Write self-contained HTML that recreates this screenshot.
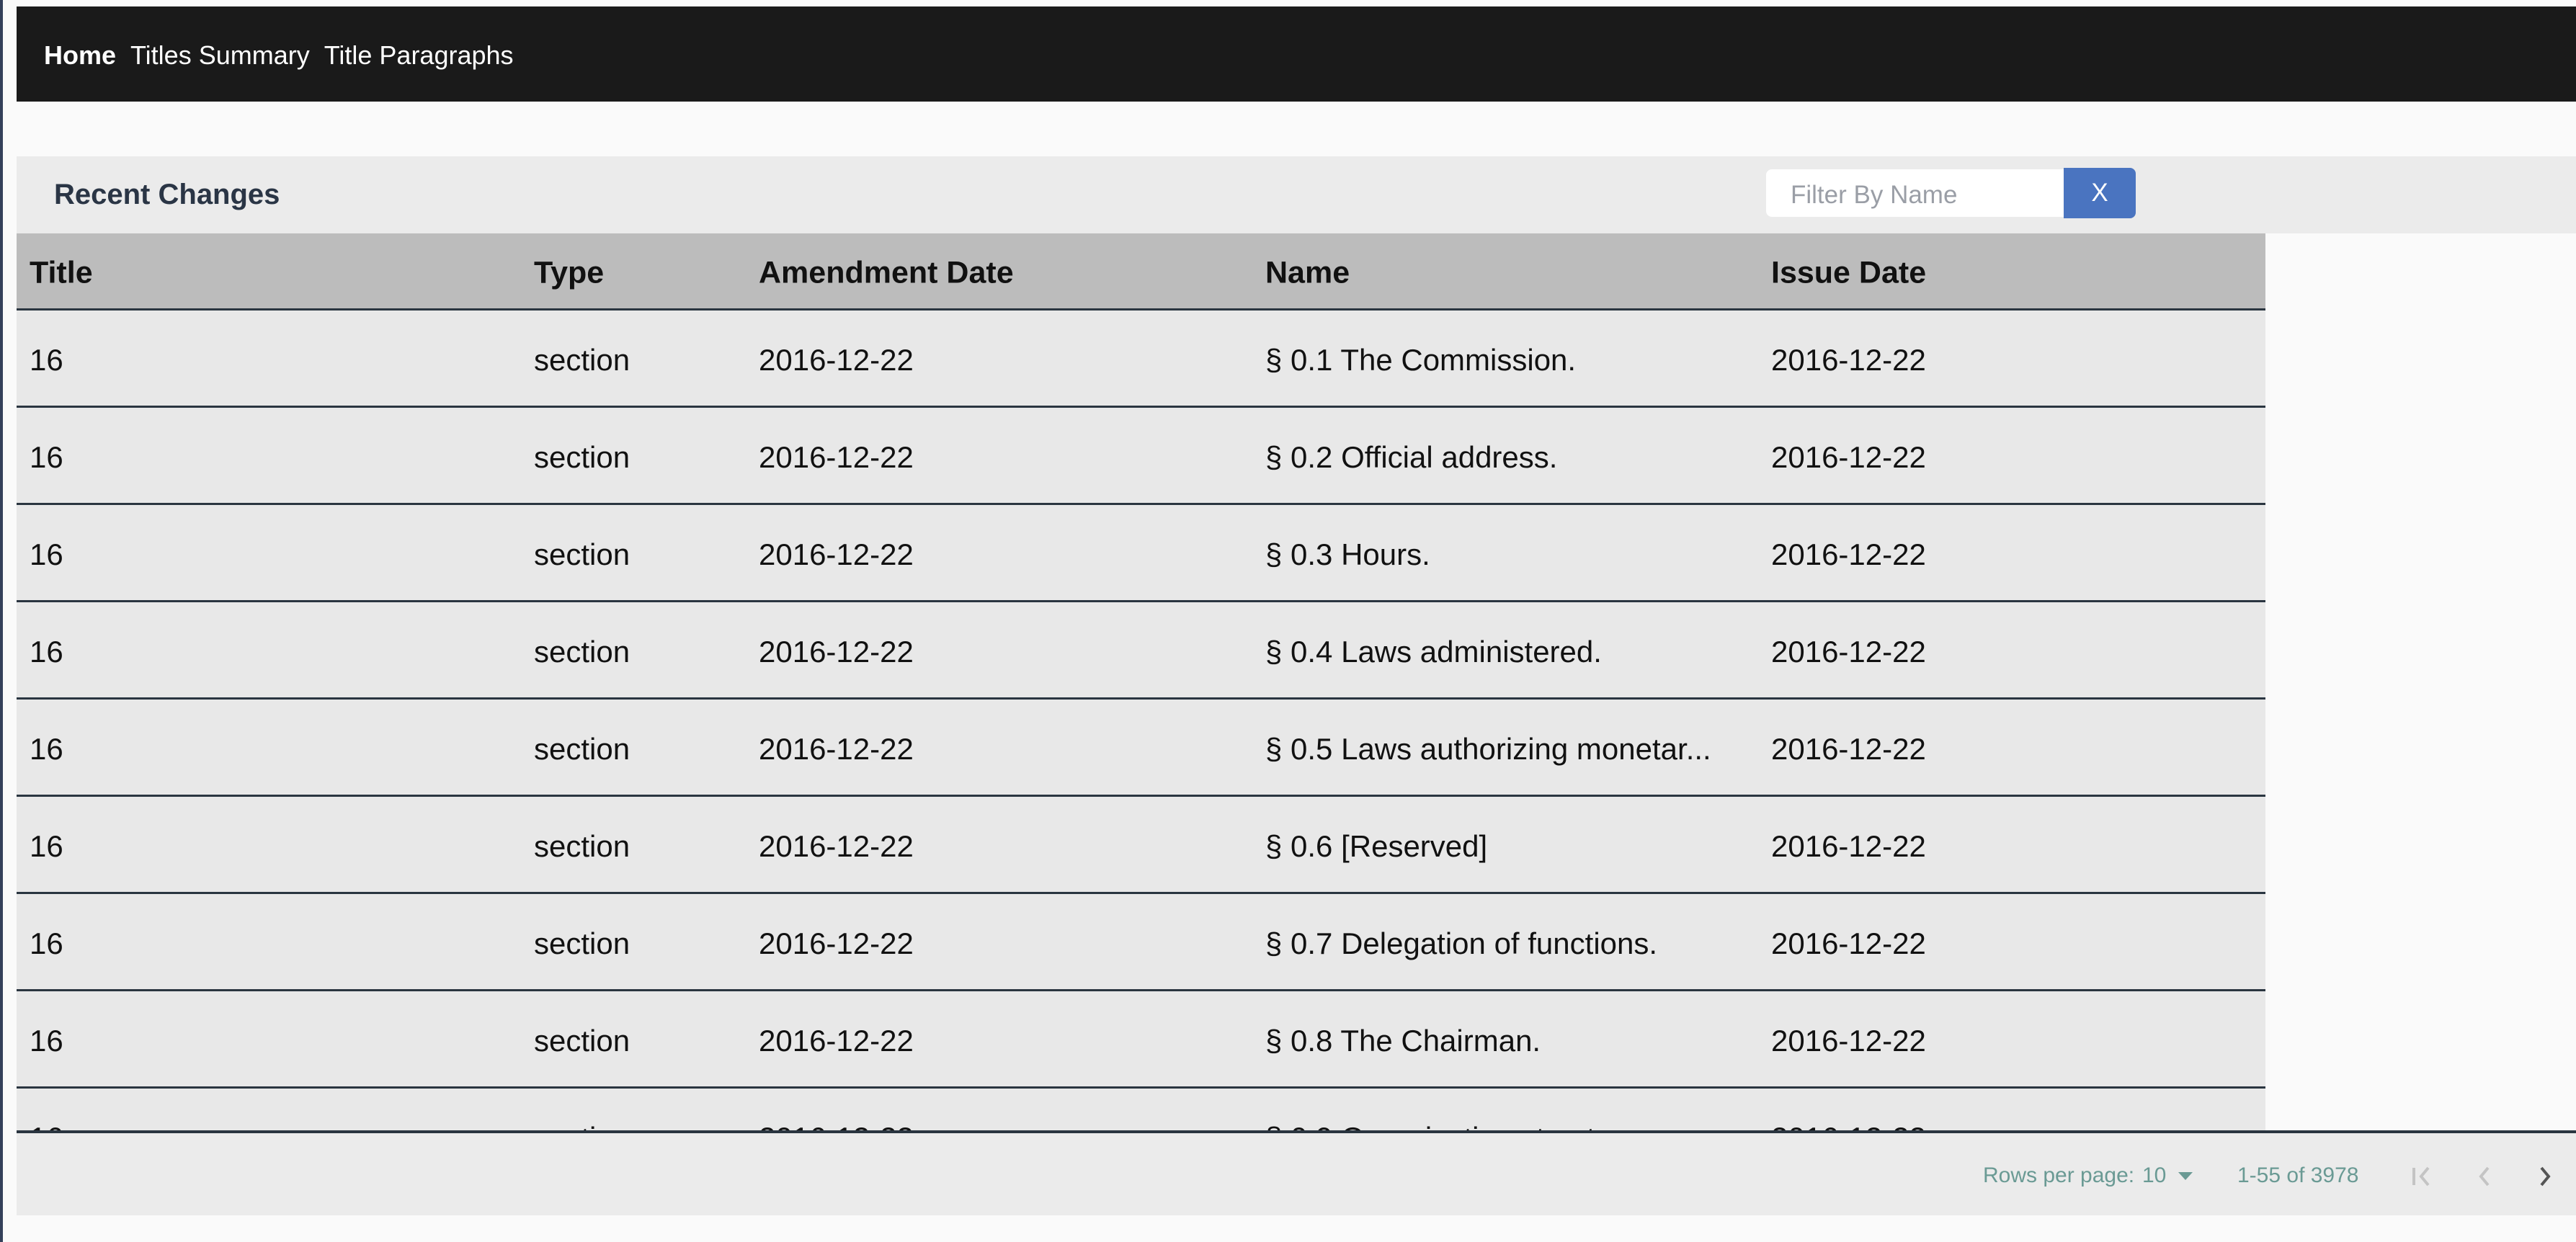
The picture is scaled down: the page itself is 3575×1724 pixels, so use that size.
<!DOCTYPE html>
<html><head><meta charset="utf-8"><style>
*{margin:0;padding:0;box-sizing:border-box}
html,body{width:3575px;height:1724px;overflow:hidden;background:#fafafa;font-family:"Liberation Sans",sans-serif}
.lb{position:absolute;left:0;top:0;width:4px;height:1724px;background:#34405a}
.nav{position:absolute;left:23px;top:9px;width:3552px;height:132px;background:#1a1a1a;color:#fff;font-size:36px;display:flex;align-items:center;padding-left:38px;padding-top:4px}
.nav span{margin-right:20px}
.hdr{position:absolute;left:23px;top:217px;width:3552px;height:107px;background:#ebebeb}
.hdr h2{position:absolute;left:52px;top:31px;font-size:40px;color:#2a3545;font-weight:bold}
.inp{position:absolute;left:2428px;top:18px;width:414px;height:66px;background:#fff;border-radius:8px 0 0 8px;color:#9a9ea6;font-size:35px;padding:16px 0 0 34px}
.btn{position:absolute;left:2841px;top:16px;width:100px;height:70px;background:#4a74c0;border-radius:0 8px 8px 0;color:#fff;font-size:35px;text-align:center;line-height:70px}
.tbl{position:absolute;left:23px;top:324px;width:3121px;height:1247px;overflow:hidden}
.row{position:relative;height:135px;background:#e8e8e8;border-bottom:3px solid #2a3540;font-size:42px;color:#111}
.row.h{height:107px;background:#bcbcbc;font-weight:bold;font-size:43px}
.row div{position:absolute;top:50%;transform:translateY(-44%);white-space:nowrap}
.c1{left:18px}.c2{left:718px}.c3{left:1030px}.c4{left:1733px}.c5{left:2435px}
.ft{position:absolute;left:23px;top:1569px;width:3552px;height:118px;background:#ebebeb;border-top:4px solid #2a3540;color:#6a9a94;font-size:30px}
.ft span{position:absolute;top:42px}
.ft svg{position:absolute;top:40px}
</style></head><body>
<div class="lb"></div>
<div class="nav"><span style="font-weight:bold">Home</span><span>Titles Summary</span><span>Title Paragraphs</span></div>
<div class="hdr"><h2>Recent Changes</h2><div class="inp">Filter By Name</div><div class="btn">X</div></div>
<div class="tbl">
<div class="row h"><div class="c1">Title</div><div class="c2">Type</div><div class="c3">Amendment Date</div><div class="c4">Name</div><div class="c5">Issue Date</div></div>
<div class="row"><div class="c1">16</div><div class="c2">section</div><div class="c3">2016-12-22</div><div class="c4">§ 0.1 The Commission.</div><div class="c5">2016-12-22</div></div>
<div class="row"><div class="c1">16</div><div class="c2">section</div><div class="c3">2016-12-22</div><div class="c4">§ 0.2 Official address.</div><div class="c5">2016-12-22</div></div>
<div class="row"><div class="c1">16</div><div class="c2">section</div><div class="c3">2016-12-22</div><div class="c4">§ 0.3 Hours.</div><div class="c5">2016-12-22</div></div>
<div class="row"><div class="c1">16</div><div class="c2">section</div><div class="c3">2016-12-22</div><div class="c4">§ 0.4 Laws administered.</div><div class="c5">2016-12-22</div></div>
<div class="row"><div class="c1">16</div><div class="c2">section</div><div class="c3">2016-12-22</div><div class="c4">§ 0.5 Laws authorizing monetar...</div><div class="c5">2016-12-22</div></div>
<div class="row"><div class="c1">16</div><div class="c2">section</div><div class="c3">2016-12-22</div><div class="c4">§ 0.6 [Reserved]</div><div class="c5">2016-12-22</div></div>
<div class="row"><div class="c1">16</div><div class="c2">section</div><div class="c3">2016-12-22</div><div class="c4">§ 0.7 Delegation of functions.</div><div class="c5">2016-12-22</div></div>
<div class="row"><div class="c1">16</div><div class="c2">section</div><div class="c3">2016-12-22</div><div class="c4">§ 0.8 The Chairman.</div><div class="c5">2016-12-22</div></div>
<div class="row"><div class="c1">16</div><div class="c2">section</div><div class="c3">2016-12-22</div><div class="c4">§ 0.9 Organization structure.</div><div class="c5">2016-12-22</div></div>
</div>
<div class="ft">
<span style="left:2729px">Rows per page:</span>
<span style="left:2950px">10</span>
<span style="left:3000px;top:54px;width:0;height:0;border-left:10px solid transparent;border-right:10px solid transparent;border-top:11px solid #6a9a94"></span>
<span style="left:3082px">1-55 of 3978</span>
<svg style="left:3321px" width="40" height="40" viewBox="0 0 40 40"><path d="M6 8V32M26 8L16 20L26 32" stroke="#c4c4c4" stroke-width="4" fill="none"/></svg>
<svg style="left:3410px" width="30" height="40" viewBox="0 0 30 40"><path d="M20 8L10 20L20 32" stroke="#c4c4c4" stroke-width="4" fill="none"/></svg>
<svg style="left:3494px" width="30" height="40" viewBox="0 0 30 40"><path d="M10 8L20 20L10 32" stroke="#555" stroke-width="4" fill="none"/></svg>
</div>
</body></html>
